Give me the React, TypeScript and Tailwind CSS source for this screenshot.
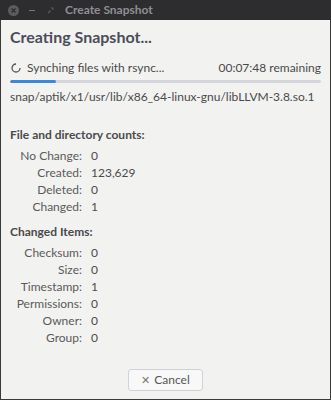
import React from "react";

const Row = ({ label, value }: { label: string; value: string }) => (
  <div className="flex h-[17px] items-center">
    <div className="w-[72px] text-right text-[#5a5a5a]">{label}</div>
    <div className="ml-[9px] text-[#4a4a4a]">{value}</div>
  </div>
);

export default function App() {
  return (
    <div
      className="w-[331px] h-[400px] flex flex-col bg-[#3a3a3a] text-[12px]"
      style={{ fontFamily: "Lato, 'Noto Sans', sans-serif" }}
    >
      <div className="h-[20px] flex items-center bg-[#2d2d30] px-[8px]">
        <div className="w-[11px] h-[11px] rounded-full bg-[#5c5c5f] flex items-center justify-center">
          <svg width="7" height="7" viewBox="0 0 7 7">
            <path d="M1.5 1.5 L5.5 5.5 M5.5 1.5 L1.5 5.5" stroke="#2d2d30" strokeWidth="1.3" />
          </svg>
        </div>
        <div className="ml-[10px] w-[6px] h-[1px] bg-[#77777a]" />
        <svg className="ml-[12px]" width="7" height="7" viewBox="0 0 7 7">
          <path d="M1 6 L3.5 3.5 M4 1 L6 1 L6 3" stroke="#5c5c5f" strokeWidth="1.2" fill="none" />
        </svg>
        <div className="ml-[11px] text-[12px] font-bold text-[#8f8f93]">Create Snapshot</div>
      </div>
      <div className="flex-1 mx-[1px] mb-[1px] bg-[#f2f2f1] px-[9px] flex flex-col">
        <div className="mt-[5px] text-[16px] font-bold text-[#4b4d58] leading-[24px]">Creating Snapshot...</div>
        <div className="mt-[11px] flex items-center h-[16px] text-[#4a4a4a]">
          <svg width="10" height="10" viewBox="0 0 10 10" className="mr-[6px] ml-[1px]">
            <path d="M5 1 A4 4 0 1 0 9 5" stroke="#555" strokeWidth="1.3" fill="none" />
          </svg>
          <span>Synching files with rsync...</span>
          <span className="ml-auto">00:07:48 remaining</span>
        </div>
        <div className="mt-[4px] h-[3px] rounded-full bg-[#d4d6db] overflow-hidden">
          <div className="h-full w-[46px] rounded-full bg-[#3b87d9]" />
        </div>
        <div className="mt-[6px] h-[16px] flex items-center text-[#4a4a4a] whitespace-nowrap">
          snap/aptik/x1/usr/lib/x86_64-linux-gnu/libLLVM-3.8.so.1
        </div>
        <div className="mt-[22px] h-[16px] flex items-center font-bold text-[#4a4a4a]">
          File and directory counts:
        </div>
        <div className="mt-[4px] flex flex-col">
          <Row label="No Change:" value="0" />
          <Row label="Created:" value="123,629" />
          <Row label="Deleted:" value="0" />
          <Row label="Changed:" value="1" />
        </div>
        <div className="mt-[9px] h-[16px] flex items-center font-bold text-[#4a4a4a]">Changed Items:</div>
        <div className="mt-[4px] flex flex-col">
          <Row label="Checksum:" value="0" />
          <Row label="Size:" value="0" />
          <Row label="Timestamp:" value="1" />
          <Row label="Permissions:" value="0" />
          <Row label="Owner:" value="0" />
          <Row label="Group:" value="0" />
        </div>
        <div className="flex-1" />
        <div className="mb-[8px] flex justify-center">
          <button className="w-[75px] h-[22px] rounded-[3px] border border-[#cfd3d8] bg-[#f8f8f8] flex items-center justify-center text-[#555] text-[12px]">
            <span className="mr-[4px] text-[11px] text-[#777]">✕</span>Cancel
          </button>
        </div>
      </div>
    </div>
  );
}
